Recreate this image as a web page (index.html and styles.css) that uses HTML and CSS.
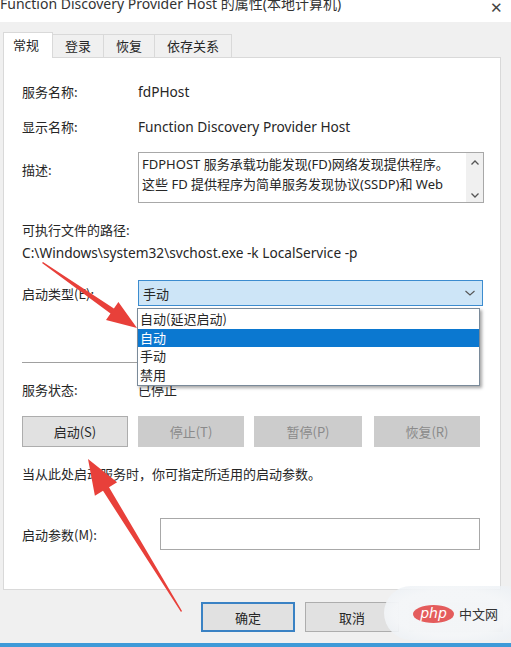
FILE: index.html
```html
<!DOCTYPE html>
<html lang="zh-CN">
<head>
    <meta charset="UTF-8">
    <title>Function Discovery Provider Host 的属性(本地计算机)</title>
    <link rel="stylesheet" href="styles.css">
</head>
<body>
    <div class="window">
        <div class="titlebar">
            <span class="title">Function Discovery Provider Host 的属性(本地计算机)</span>
            <span class="close">✕</span>
        </div>

        <div class="tabs">
            <div class="tab active">常规</div>
            <div class="tab">登录</div>
            <div class="tab">恢复</div>
            <div class="tab">依存关系</div>
        </div>

        <div class="panel">
            <div class="row name-row">
                <span class="label">服务名称:</span>
                <span class="latin">fdPHost</span>
            </div>
            <div class="row display-row">
                <span class="label">显示名称:</span>
                <span class="latin">Function Discovery Provider Host</span>
            </div>
            <div class="row desc-row">
                <span class="label desc-label">描述:</span>
                <div class="desc-box">
                    <div class="desc-text">FDPHOST 服务承载功能发现(FD)网络发现提供程序。<br>这些 FD 提供程序为简单服务发现协议(SSDP)和 Web</div>
                    <div class="scroll">
                        <svg width="10" height="8" viewBox="0 0 10 8"><path d="M1.5 5.5 L5 2 L8.5 5.5" fill="none" stroke="#555" stroke-width="1.3"/></svg>
                        <svg width="10" height="8" viewBox="0 0 10 8"><path d="M1.5 2.5 L5 6 L8.5 2.5" fill="none" stroke="#555" stroke-width="1.3"/></svg>
                    </div>
                </div>
            </div>
            <div class="path-label">可执行文件的路径:</div>
            <div class="path latin">C:\Windows\system32\svchost.exe -k LocalService -p</div>
            <div class="row type-row">
                <span class="label">启动类型(E):</span>
                <div class="combo">
                    <span>手动</span>
                    <svg width="12" height="8" viewBox="0 0 12 8"><path d="M1.5 2 L6 6 L10.5 2" fill="none" stroke="#555" stroke-width="1.1"/></svg>
                </div>
            </div>
            <div class="divider"></div>
            <div class="row status-row">
                <span class="label">服务状态:</span>
                <span>已停止</span>
            </div>
            <div class="actions">
                <button class="btn">启动(S)</button>
                <button class="btn disabled">停止(T)</button>
                <button class="btn disabled">暂停(P)</button>
                <button class="btn disabled">恢复(R)</button>
            </div>
            <div class="note">当从此处启动服务时，你可指定所适用的启动参数。</div>
            <div class="row param-row">
                <span class="label">启动参数(M):</span>
                <div class="param-input"></div>
            </div>
        </div>

        <div class="footer">
            <button class="btn default">确定</button>
            <button class="btn">取消</button>
            <button class="btn disabled"></button>
        </div>
        <div class="bottom-line"></div>

        <ul class="dropdown">
            <li>自动(延迟启动)</li>
            <li class="selected">自动</li>
            <li>手动</li>
            <li>禁用</li>
        </ul>

        <svg class="arrows" width="511" height="647" viewBox="0 0 511 647">
            <polygon points="42,263 110.5,313.5 106,320 137,328 118.4,302 113.9,308.5 43,262" fill="#e8403a"/>
            <polygon points="181,612 103,490.8 94.9,495.7 88,459 117.1,482.3 109,487.2 182,611" fill="#e8403a"/>
        </svg>

        <div class="watermark">
            <span class="php">php</span>
            <span class="cn">中文网</span>
        </div>
    </div>
</body>
</html>
```

FILE: styles.css
```css
body {
    margin: 0;
    background-color: #f0f0f0;
    font-family: "Noto Sans", "Noto Sans CJK SC", sans-serif;
    font-size: 13px;
    color: #262626;
}
.window {
    position: relative;
    width: 511px;
    height: 647px;
    overflow: hidden;
}
.titlebar {
    height: 22px;
    background-color: #fff;
    display: flex;
    justify-content: space-between;
    align-items: flex-start;
}
.title {
    font-size: 14px;
    line-height: 14px;
    margin-top: -3px;
    color: #333;
}
.close {
    font-size: 15px;
    line-height: 14px;
    margin-right: 8px;
    color: #444;
}
.tabs {
    display: flex;
    align-items: flex-end;
    margin-top: 10px;
    margin-left: 3px;
    height: 25px;
}
.tab {
    height: 22px;
    line-height: 22px;
    padding: 0 12px;
    background-color: #f0f0f0;
    border: 1px solid #d9d9d9;
    border-bottom: none;
    margin-right: -1px;
    font-family: "Noto Sans CJK SC", sans-serif;
}
.tab.active {
    height: 25px;
    line-height: 24px;
    background-color: #fff;
    padding: 0 13px 0 9px;
    position: relative;
    z-index: 1;
    margin-bottom: -1px;
}
.panel {
    margin-left: 3px;
    width: 478px;
    height: 507px;
    border: 1px solid #d9d9d9;
    background-color: #fff;
    padding: 24px 0 0 18px;
}
.row {
    display: flex;
    align-items: center;
}
.label {
    width: 116px;
    flex-shrink: 0;
    font-family: "Noto Sans CJK SC", sans-serif;
}
.latin {
    font-size: 13.7px;
}
.name-row {
    height: 18px;
}
.display-row {
    height: 18px;
    margin-top: 17px;
}
.desc-row {
    align-items: flex-start;
    margin-top: 17px;
}
.desc-label {
    margin-top: 8px;
}
.desc-box {
    width: 341px;
    height: 49px;
    border: 1px solid #a8a8a8;
    display: flex;
    padding-left: 3px;
}
.desc-text {
    flex: 1;
    line-height: 20px;
    height: 45px;
    overflow: hidden;
    white-space: nowrap;
    margin-top: 1px;
}
.scroll {
    width: 17px;
    background-color: #f0f0f0;
    display: flex;
    flex-direction: column;
    justify-content: space-between;
    align-items: center;
    padding: 6px 0 3px;
    margin-left: 2px;
}
.path-label {
    margin-top: 18px;
    height: 18px;
    line-height: 18px;
    font-family: "Noto Sans CJK SC", sans-serif;
}
.path {
    margin-top: 5px;
    height: 18px;
    line-height: 18px;
}
.type-row {
    margin-top: 18px;
}
.combo {
    width: 333px;
    height: 24px;
    border: 1px solid #3c8ccf;
    background-color: #cde5f7;
    display: flex;
    justify-content: space-between;
    align-items: center;
    padding: 0 6px 0 4px;
    font-family: "Noto Sans CJK SC", sans-serif;
}
.divider {
    margin-top: 56px;
    width: 458px;
    height: 1px;
    background-color: #a0a0a0;
}
.status-row {
    margin-top: 17px;
    height: 18px;
}
.actions {
    display: flex;
    margin-top: 18px;
}
.btn {
    height: 31px;
    width: 106px;
    border: 1px solid #adadad;
    background-color: #e1e1e1;
    font-family: "Noto Sans CJK SC", sans-serif;
    font-size: 13px;
    color: #262626;
    padding: 0;
}
.actions .btn {
    margin-right: 10px;
}
.actions .btn:nth-child(3) {
    width: 108px;
    margin-right: 12px;
}
.btn.disabled {
    background-color: #cccccc;
    border-color: #cccccc;
    color: #8a8a8a;
}
.note {
    margin-top: 18px;
    height: 18px;
    line-height: 18px;
    font-family: "Noto Sans CJK SC", sans-serif;
}
.param-row {
    margin-top: 35px;
}
.param-input {
    width: 318px;
    height: 30px;
    border: 1px solid #a8a8a8;
    margin-left: 22px;
}
.footer {
    display: flex;
    justify-content: flex-end;
    gap: 10px;
    margin-top: 12px;
    margin-right: 8px;
}
.footer .btn {
    width: 94px;
    height: 30px;
}
.btn.default {
    border: 2px solid #3a82c4;
}
.bottom-line {
    position: absolute;
    left: 0;
    right: 0;
    bottom: 0;
    height: 4px;
    background-color: #3e9ad8;
}
.dropdown {
    position: absolute;
    left: 137px;
    top: 308px;
    width: 341px;
    margin: 0;
    padding: 1px 0;
    list-style: none;
    background-color: #fff;
    border: 1px solid #7a8a99;
    box-shadow: 2px 2px 3px rgba(0, 0, 0, 0.35);
    font-family: "Noto Sans CJK SC", sans-serif;
}
.dropdown li {
    height: 18.5px;
    line-height: 18px;
    padding-left: 2px;
}
.dropdown li.selected {
    background-color: #0b78d0;
    color: #fff;
}
.arrows {
    position: absolute;
    left: 0;
    top: 0;
    pointer-events: none;
}
.watermark {
    position: absolute;
    left: 384px;
    top: 586px;
    width: 135px;
    height: 54px;
    border-radius: 30px 10px 10px 30px;
    background: radial-gradient(ellipse at center, rgba(244, 246, 248, 0.98) 60%, rgba(238, 242, 246, 0.85) 85%, rgba(240, 240, 240, 0.2) 100%);
    display: flex;
    align-items: center;
    padding-left: 29px;
    box-sizing: border-box;
}
.php {
    display: inline-block;
    width: 41px;
    height: 18px;
    line-height: 16px;
    border-radius: 50%;
    background-color: #e45c5c;
    color: #fff;
    font-family: "DejaVu Sans", sans-serif;
    font-style: italic;
    font-size: 14px;
    text-align: center;
    margin-top: 2px;
}
.cn {
    margin-left: 5px;
    font-family: "Noto Sans CJK SC", sans-serif;
    font-size: 13px;
    color: #333;
    margin-top: 1px;
}
```
